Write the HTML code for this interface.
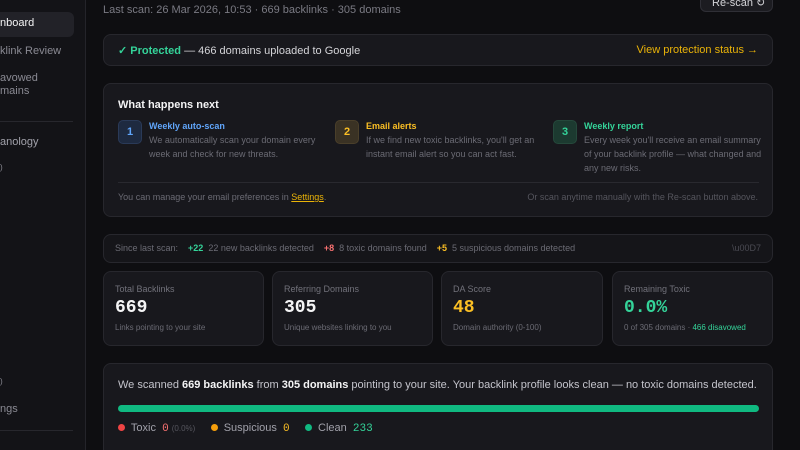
<!DOCTYPE html>
<html><head><meta charset="utf-8"><style>
*{box-sizing:border-box;margin:0;padding:0}
html,body{width:800px;height:450px;overflow:hidden}
body{background:#0e0e11;font-family:"Liberation Sans",sans-serif;color:#d4d4d8;position:relative}
.sb{position:absolute;left:0;top:0;width:86px;height:450px;background:#131317;border-right:1px solid #24242a}
.sb .t{position:absolute;font-size:11px;color:#8a8a93}
.card{position:absolute;background:#18181d;border:1px solid #27272d;border-radius:8px}
.abs{position:absolute;white-space:nowrap}
.mono{font-family:"Liberation Mono",monospace}
.num{position:absolute;width:24px;height:24px;border-radius:5px;font-size:11px;font-weight:bold;display:flex;align-items:center;justify-content:center}
.st .l{position:absolute;left:11px;top:12px;font-size:9px;color:#71717a}
.st .v{position:absolute;left:11px;top:26px;font-size:18px;font-weight:bold;font-family:"Liberation Mono",monospace;color:#f4f4f5}
.st .d{position:absolute;left:11px;top:51px;font-size:8px;color:#6b6b74;white-space:nowrap}
</style></head><body>
<div class="sb">
<div style="position:absolute;left:-8px;top:12px;width:82px;height:25px;background:#222228;border-radius:6px"></div>
<div class="t" style="left:0;top:17px;color:#f4f4f5">nboard</div>
<div class="t" style="left:0;top:45px">klink Review</div>
<div class="t" style="left:0;top:72px">avowed</div>
<div class="t" style="left:0;top:85px">mains</div>
<div style="position:absolute;left:0;top:121px;width:73px;height:1px;background:#27272d"></div>
<div class="t" style="left:0;top:136px;color:#a1a1aa">anology</div>
<div class="t" style="left:0;top:163px;font-size:8px">)</div>
<div class="t" style="left:0;top:377px;font-size:8px">)</div>
<div class="t" style="left:0;top:403px">ngs</div>
<div style="position:absolute;left:0;top:430px;width:73px;height:1px;background:#27272d"></div>
</div>
<div class="abs" style="left:103px;top:4px;font-size:11px;color:#7a7a83">Last scan: 26 Mar 2026, 10:53 · 669 backlinks · 305 domains</div>
<div class="abs" style="left:700px;top:-8px;width:73px;height:20px;background:#1c1c21;border:1px solid #2f2f36;border-radius:6px;font-size:11px;color:#d4d4d8;padding:3px 0 0 11px">Re-scan ↻</div>

<div class="card" style="left:103px;top:34px;width:670px;height:32px">
<div class="abs" style="left:14px;top:9px;font-size:11px;color:#d4d4d8"><span style="color:#34d399;font-weight:bold">✓ Protected</span> — 466 domains uploaded to Google</div>
<div class="abs" style="right:14px;top:9px;font-size:11px;color:#eab308">View protection status →</div>
</div>

<div class="card" style="left:103px;top:83px;width:670px;height:134px">
<div class="abs" style="left:14px;top:15px;font-size:11px;color:#f4f4f5;font-weight:bold">What happens next</div>
<div class="num" style="left:14px;top:36px;background:#1e2a40;border:1px solid #2a3a58;color:#60a5fa">1</div>
<div class="abs" style="left:45px;top:37px;font-size:9px;font-weight:bold;color:#60a5fa">Weekly auto-scan</div>
<div class="abs" style="left:45px;top:49px;font-size:9px;line-height:14px;color:#6b6b74">We automatically scan your domain every<br>week and check for new threats.</div>
<div class="num" style="left:231px;top:36px;background:#3a3224;border:1px solid #4a3f2a;color:#fbbf24">2</div>
<div class="abs" style="left:262px;top:37px;font-size:9px;font-weight:bold;color:#fbbf24">Email alerts</div>
<div class="abs" style="left:262px;top:49px;font-size:9px;line-height:14px;color:#6b6b74">If we find new toxic backlinks, you'll get an<br>instant email alert so you can act fast.</div>
<div class="num" style="left:449px;top:36px;background:#1c3a30;border:1px solid #25483b;color:#34d399">3</div>
<div class="abs" style="left:480px;top:37px;font-size:9px;font-weight:bold;color:#34d399">Weekly report</div>
<div class="abs" style="left:480px;top:49px;font-size:9px;line-height:14px;color:#6b6b74">Every week you'll receive an email summary<br>of your backlink profile — what changed and<br>any new risks.</div>
<div style="position:absolute;left:14px;top:98px;width:641px;height:1px;background:#29292f"></div>
<div class="abs" style="left:14px;top:108px;font-size:9px;color:#6b6b74">You can manage your email preferences in <span style="color:#eab308;text-decoration:underline">Settings</span>.</div>
<div class="abs" style="right:14px;top:108px;font-size:9px;color:#55555d">Or scan anytime manually with the Re-scan button above.</div>
</div>

<div class="card" style="left:103px;top:234px;width:670px;height:29px;background:#151519">
<div class="abs" style="left:11px;top:8px;font-size:9px;color:#6b6b74">Since last scan: &nbsp;&nbsp;&nbsp;<b style="color:#34d399">+22</b> &nbsp;22 new backlinks detected &nbsp;&nbsp;&nbsp;<b style="color:#f87171">+8</b> &nbsp;8 toxic domains found &nbsp;&nbsp;&nbsp;<b style="color:#fbbf24">+5</b> &nbsp;5 suspicious domains detected</div>
<div class="abs" style="right:11px;top:8px;font-size:9px;color:#4a4a52">\u00D7</div>
</div>

<div class="card st" style="left:103px;top:271px;width:161px;height:75px"><div class="l">Total Backlinks</div><div class="v">669</div><div class="d">Links pointing to your site</div></div>
<div class="card st" style="left:272px;top:271px;width:161px;height:75px"><div class="l">Referring Domains</div><div class="v">305</div><div class="d">Unique websites linking to you</div></div>
<div class="card st" style="left:441px;top:271px;width:162px;height:75px"><div class="l">DA Score</div><div class="v" style="color:#fbbf24">48</div><div class="d">Domain authority (0-100)</div></div>
<div class="card st" style="left:612px;top:271px;width:161px;height:75px"><div class="l">Remaining Toxic</div><div class="v" style="color:#34d399">0.0%</div><div class="d">0 of 305 domains · <span style="color:#34d399">466 disavowed</span></div></div>

<div class="card" style="left:103px;top:363px;width:670px;height:95px">
<div class="abs" style="left:14px;top:15px;font-size:11px;color:#c4c4cc">We scanned <b style="color:#f4f4f5">669 backlinks</b> from <b style="color:#f4f4f5">305 domains</b> pointing to your site. Your backlink profile looks clean — no toxic domains detected.</div>
<div style="position:absolute;left:14px;top:41px;width:641px;height:7px;border-radius:4px;background:#10b981"></div>
<div class="abs" style="left:14px;top:58px;font-size:11px;color:#a1a1aa">
<span style="display:inline-block;width:7px;height:7px;border-radius:50%;background:#ef4444"></span>&nbsp; Toxic &nbsp;<span class="mono" style="color:#f87171">0</span> <span style="font-size:8px;color:#55555d">(0.0%)</span> &nbsp;&nbsp;&nbsp;
<span style="display:inline-block;width:7px;height:7px;border-radius:50%;background:#f59e0b"></span>&nbsp; Suspicious &nbsp;<span class="mono" style="color:#fbbf24">0</span> &nbsp;&nbsp;&nbsp;
<span style="display:inline-block;width:7px;height:7px;border-radius:50%;background:#10b981"></span>&nbsp; Clean &nbsp;<span class="mono" style="color:#34d399">233</span></div>
</div>
</body></html>
